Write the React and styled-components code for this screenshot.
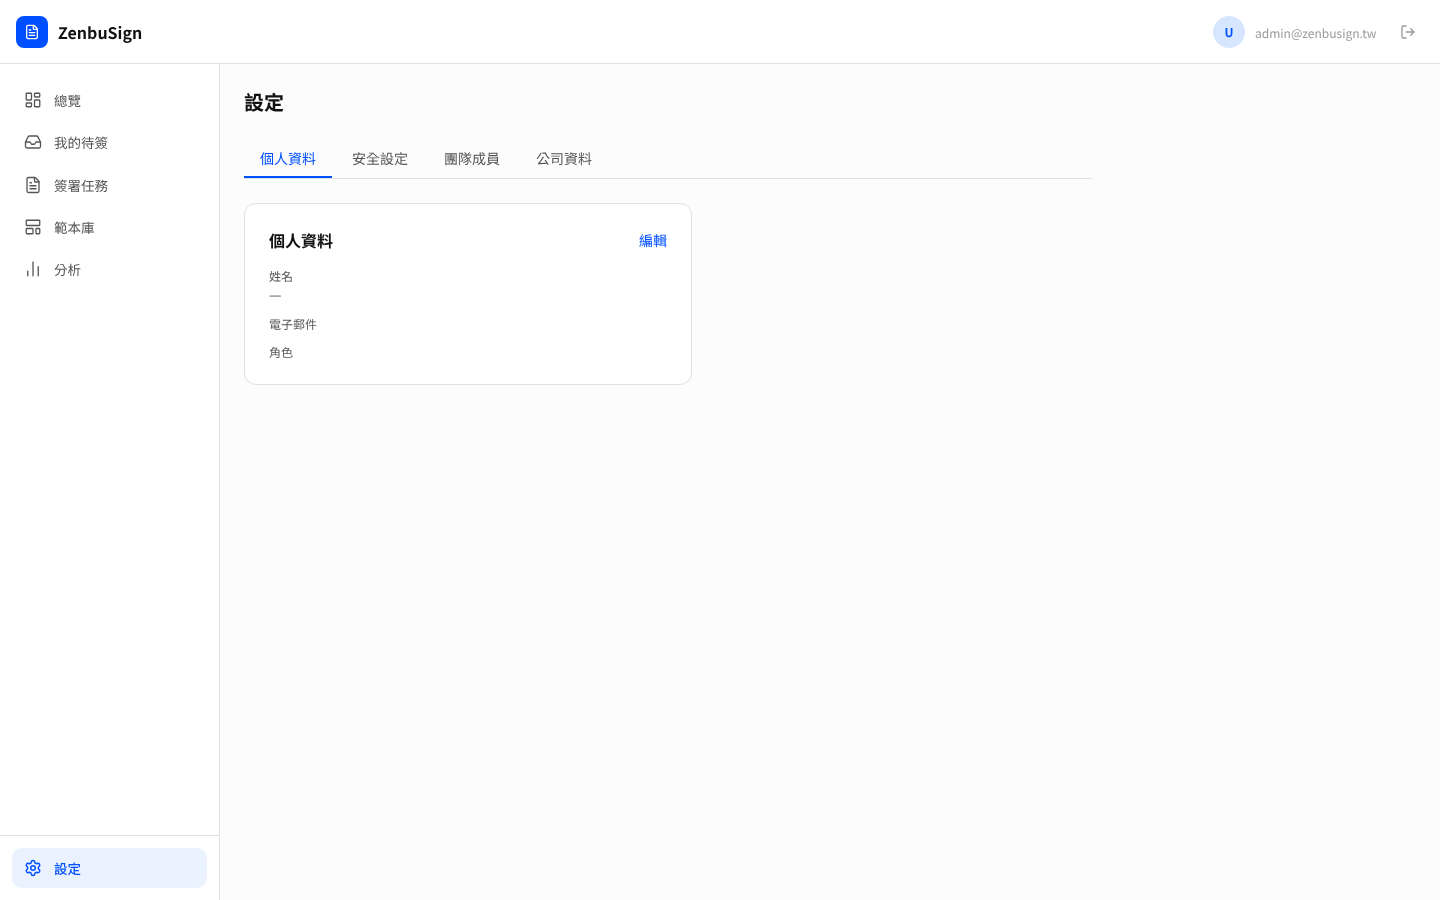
import React from 'react';
import styled, { createGlobalStyle, css } from 'styled-components';
import { LayoutDashboard, Inbox, FileText, LayoutTemplate, BarChart2, Settings, LogOut } from 'lucide-react';

const Global = createGlobalStyle`
  html, body { margin: 0; padding: 0; }
  body { font-family: "Noto Sans CJK TC", "Noto Sans", sans-serif; background: #fcfcfc; color: #111; text-rendering: geometricPrecision; }
  * { box-sizing: border-box; }
`;
const grayText = css`will-change: transform;`;
const Page = styled.div`height: 900px; display: flex; flex-direction: column; overflow: hidden;`;
const Header = styled.header`
  height: 64px; flex: none; background: #fff; border-bottom: 1px solid #e0e0e0;
  display: flex; align-items: center; justify-content: space-between; padding: 0 24px 0 16px;
`;
const Brand = styled.div`display: flex; align-items: center; gap: 10px;`;
const Logo = styled.div`
  width: 32px; height: 32px; border-radius: 8px; background: #0050ff; color: #fff;
  display: flex; align-items: center; justify-content: center;
`;
const BrandName = styled.span`${grayText} font-size: 16px; font-weight: 700; color: #111; line-height: 24px;`;
const UserArea = styled.div`display: flex; align-items: center; color: #999;`;
const Avatar = styled.div`
  ${grayText}
  width: 32px; height: 32px; border-radius: 50%; background: #d6e6ff; color: #0050ff;
  display: flex; align-items: center; justify-content: center; font-size: 12px; font-weight: 700;
`;
const Email = styled.span`${grayText} font-size: 12px; color: #999; margin: 4px 24px 0 10px;`;
const IconBox = styled.span`display: inline-flex; color: #999;`;
const Body = styled.div`flex: 1; display: flex; min-height: 0;`;
const Sidebar = styled.aside`
  width: 220px; flex: none; background: #fff; border-right: 1px solid #e0e0e0;
  display: flex; flex-direction: column; justify-content: space-between;
`;
const Nav = styled.nav`padding: 16px 12px 0; display: flex; flex-direction: column; gap: 2px;`;
const NavItem = styled.a`
  ${grayText}
  display: flex; align-items: center; gap: 12px; padding: 0 12px; height: 40.3px;
  border-radius: 10px; font-size: 13.5px; line-height: 20px; color: ${p => p.$active ? '#0050ff' : '#555'};
  background: ${p => p.$active ? '#ebf2ff' : 'transparent'}; font-weight: ${p => p.$active ? 500 : 400};
`;
const SideFoot = styled.div`border-top: 1px solid #e0e0e0; padding: 12px;`;
const Main = styled.main`flex: 1; padding: 24px; min-width: 0;`;
const Title = styled.h1`${grayText} margin: 0; font-size: 20px; font-weight: 700; line-height: 28px; color: #111;`;
const Tabs = styled.div`
  width: 848px; margin-top: 24px; display: flex; gap: 4px; border-bottom: 1px solid #e0e0e0;
`;
const Tab = styled.div`
  ${grayText}
  padding: 9px 16px 7px; font-size: 14px; line-height: 20px;
  color: ${p => p.$active ? '#0050ff' : '#555'};
  border-bottom: 2px solid ${p => p.$active ? '#0050ff' : 'transparent'};
`;
const Card = styled.section`
  width: 448px; height: 182px; margin-top: 24px; background: #fff; border: 1px solid #e0e0e0; border-radius: 12px;
  padding: 24px;
`;
const CardHead = styled.div`display: flex; justify-content: space-between; align-items: center; height: 24px;`;
const CardTitle = styled.h2`${grayText} margin: 0; font-size: 16px; font-weight: 700; color: #111;`;
const EditLink = styled.a`${grayText} font-size: 14px; line-height: 20px; padding-top: 2px; color: #0050ff;`;
const Fields = styled.div`margin-top: 16px; display: flex; flex-direction: column; gap: 10px;`;
const Field = styled.div`display: flex; flex-direction: column;`;
const Label = styled.span`${grayText} font-size: 12px; line-height: 18px; color: #555;`;
const Value = styled.span`${grayText} font-size: 14px; line-height: 20px; margin: -1px 0 1px; color: #555;`;

const items = [
  [LayoutDashboard, '總覽'], [Inbox, '我的待簽'], [FileText, '簽署任務'], [LayoutTemplate, '範本庫'], [BarChart2, '分析'],
];

export default function App() {
  return (
    <Page>
      <Global />
      <Header>
        <Brand>
          <Logo><FileText size={16} strokeWidth={2} /></Logo>
          <BrandName>ZenbuSign</BrandName>
        </Brand>
        <UserArea>
          <Avatar>U</Avatar>
          <Email>admin@zenbusign.tw</Email>
          <IconBox><LogOut size={16} strokeWidth={2} /></IconBox>
        </UserArea>
      </Header>
      <Body>
        <Sidebar>
          <Nav>
            {items.map(([I, t]) => (
              <NavItem key={t}><I size={18} strokeWidth={1.75} />{t}</NavItem>
            ))}
          </Nav>
          <SideFoot>
            <NavItem $active><Settings size={18} strokeWidth={2} />設定</NavItem>
          </SideFoot>
        </Sidebar>
        <Main>
          <Title>設定</Title>
          <Tabs>
            <Tab $active>個人資料</Tab>
            <Tab>安全設定</Tab>
            <Tab>團隊成員</Tab>
            <Tab>公司資料</Tab>
          </Tabs>
          <Card>
            <CardHead>
              <CardTitle>個人資料</CardTitle>
              <EditLink>編輯</EditLink>
            </CardHead>
            <Fields>
              <Field><Label>姓名</Label><Value>—</Value></Field>
              <Field><Label>電子郵件</Label></Field>
              <Field><Label>角色</Label></Field>
            </Fields>
          </Card>
        </Main>
      </Body>
    </Page>
  );
}
